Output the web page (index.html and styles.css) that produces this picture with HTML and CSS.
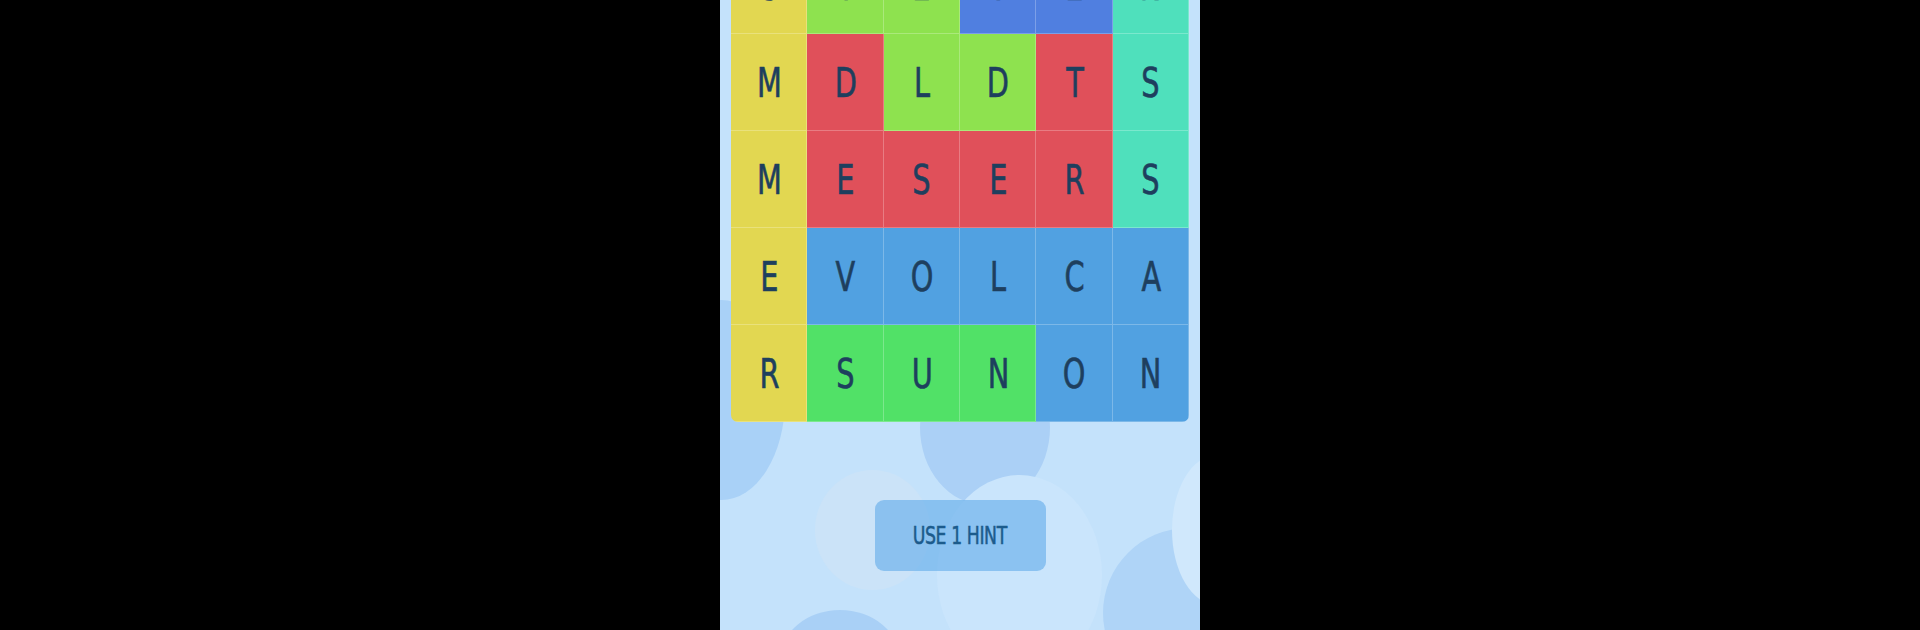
FILE: index.html
```html
<!DOCTYPE html>
<html>
<head>
<meta charset="utf-8">
<link rel="stylesheet" href="styles.css">
</head>
<body>
<div class="stage">
  <div class="phone">
    <div class="bokeh b1"></div>
    <div class="bokeh b2"></div>
    <div class="bokeh b3"></div>
    <div class="bokeh b4"></div>
    <div class="bokeh b5"></div>
    <div class="bokeh b6"></div>
    <div class="bokeh b7"></div>
    <div class="content">
      <div class="board">
        <div class="cell yellow"><span>S</span></div>
        <div class="cell lime"><span>Y</span></div>
        <div class="cell lime"><span>E</span></div>
        <div class="cell navy"><span>V</span></div>
        <div class="cell navy"><span>E</span></div>
        <div class="cell teal"><span>N</span></div>

        <div class="cell yellow"><span>M</span></div>
        <div class="cell red"><span>D</span></div>
        <div class="cell lime"><span>L</span></div>
        <div class="cell lime"><span>D</span></div>
        <div class="cell red"><span>T</span></div>
        <div class="cell teal"><span>S</span></div>

        <div class="cell yellow"><span>M</span></div>
        <div class="cell red"><span>E</span></div>
        <div class="cell red"><span>S</span></div>
        <div class="cell red"><span>E</span></div>
        <div class="cell red"><span>R</span></div>
        <div class="cell teal"><span>S</span></div>

        <div class="cell yellow"><span>E</span></div>
        <div class="cell blue"><span>V</span></div>
        <div class="cell blue"><span>O</span></div>
        <div class="cell blue"><span>L</span></div>
        <div class="cell blue"><span>C</span></div>
        <div class="cell blue"><span>A</span></div>

        <div class="cell yellow"><span>R</span></div>
        <div class="cell green"><span>S</span></div>
        <div class="cell green"><span>U</span></div>
        <div class="cell green"><span>N</span></div>
        <div class="cell blue"><span>O</span></div>
        <div class="cell blue"><span>N</span></div>
      </div>
      <button class="hint"><span>USE 1 HINT</span></button>
    </div>
  </div>
</div>
</body>
</html>
```

FILE: styles.css
```css
html, body {
  margin: 0;
  padding: 0;
  background: #000;
}
.stage {
  width: 1920px;
  height: 630px;
  display: flex;
  justify-content: center;
  background: #000;
}
.phone {
  width: 480px;
  height: 630px;
  position: relative;
  overflow: hidden;
  background: #c4e2fb;
}
.bokeh {
  position: absolute;
  border-radius: 50%;
}
.b1 { left: -62px; top: 300px; width: 127px; height: 200px; background: #a9d1f7; }
.b2 { left: 200px; top: 350px; width: 130px; height: 155px; background: #abd0f6; }
.b3 { left: 95px; top: 470px; width: 115px; height: 120px; background: #cbe3f8; }
.b4 { left: 217px; top: 475px; width: 165px; height: 200px; background: #cae5fc; }
.b5 { left: 383px; top: 528px; width: 170px; height: 170px; background: #afd4f7; }
.b6 { left: 452px; top: 455px; width: 90px; height: 150px; background: #d0e8fc; }
.b7 { left: 60px; top: 610px; width: 120px; height: 100px; background: #a9d0f6; }
.content {
  position: relative;
  display: flex;
  flex-direction: column;
  align-items: center;
}
.board {
  margin-top: -63px;
  width: 458px;
  display: grid;
  grid-template-columns: repeat(6, 1fr);
  grid-template-rows: repeat(5, 97px);
  border-radius: 0 0 7px 7px;
  overflow: hidden;
}
.cell {
  display: flex;
  align-items: center;
  justify-content: center;
  font-family: "DejaVu Sans Condensed", "DejaVu Sans", sans-serif;
  font-size: 40px;
  color: #1e3f5e;
  box-shadow: inset -1px -1px 0 rgba(255, 255, 255, 0.25);
}
.cell span {
  display: inline-block;
  transform: scaleX(0.8);
  -webkit-text-stroke: 0.6px #1e3f5e;
}
.yellow { background: #e2d751; }
.lime { background: #8ee24f; }
.navy { background: #507fe0; }
.teal { background: #4fe0bc; }
.red { background: #e0505a; }
.blue { background: #51a1e1; }
.green { background: #51e167; }
.hint {
  margin-top: 78px;
  width: 171px;
  height: 71px;
  border: none;
  border-radius: 9px;
  background: rgba(88, 165, 232, 0.55);
  color: #1c5b8c;
  font-family: "DejaVu Sans Condensed", "DejaVu Sans", sans-serif;
  font-size: 24px;
  padding: 0;
  display: flex;
  align-items: center;
  justify-content: center;
}
.hint span {
  display: inline-block;
  transform: scaleX(0.8);
  letter-spacing: -0.5px;
  -webkit-text-stroke: 0.5px #1c5b8c;
}
```
